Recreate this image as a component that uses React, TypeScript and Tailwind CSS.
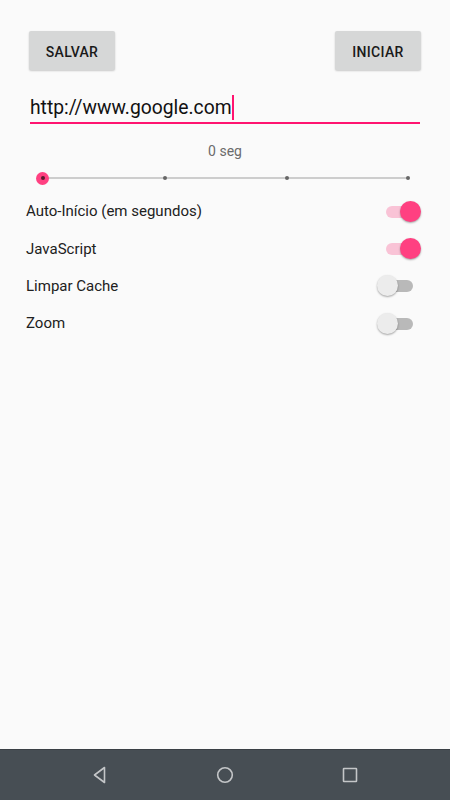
const Toggle = ({ on }: { on: boolean }) => {
    return (
        <div className="relative w-[44px] h-[22px]">
            <div
                className={
                    "absolute left-[9px] top-[5px] w-[27px] h-[12px] rounded-full " +
                    (on ? "bg-[#f9c3d6]" : "bg-[#b9b9b9]")
                }
            />
            <div
                className={
                    "absolute top-0 w-[21px] h-[21px] rounded-full shadow-[0_1px_2px_rgba(0,0,0,0.35)] " +
                    (on ? "left-[23px] bg-[#ff4081]" : "left-0 bg-[#ececec]")
                }
            />
        </div>
    );
};

const settings = [
    { label: "Auto-Início (em segundos)", on: true },
    { label: "JavaScript", on: true },
    { label: "Limpar Cache", on: false },
    { label: "Zoom", on: false },
];

export default function App() {
    return (
        <div className="w-full h-[800px] flex flex-col bg-[#fafafa] font-['Roboto',sans-serif] text-[#212121]">
            <div className="flex-1 px-[26px] pt-[31px]">
                <div className="flex justify-between px-[3px]">
                    <button className="w-[86px] h-[39px] pt-[3px] rounded-[2px] bg-[#d6d7d7] shadow-[0_1px_2px_rgba(0,0,0,0.2)] text-[14px] font-medium tracking-[0.3px] text-[#1a1a1a]">
                        SALVAR
                    </button>
                    <button className="w-[86px] h-[39px] pt-[3px] rounded-[2px] bg-[#d6d7d7] shadow-[0_1px_2px_rgba(0,0,0,0.2)] text-[14px] font-medium tracking-[0.3px] text-[#1a1a1a]">
                        INICIAR
                    </button>
                </div>

                <div className="mx-[4px] mt-[25px] border-b-2 border-[#ff1470] pb-[2px] flex items-center">
                    <span className="text-[19.3px] leading-[25px] text-[#111]">http://www.google.com</span>
                    <span className="w-[2px] h-[25px] bg-[#ff1470]" />
                </div>

                <div className="mt-[19px] text-center text-[14px] leading-[16px] text-[#6b6b6b]">0 seg</div>

                <div className="relative mt-[12px] mx-[16px] h-[14px] flex items-center">
                    <div className="absolute left-0 right-0 h-[2px] bg-[#cdcdcd]" />
                    <div className="relative w-full flex justify-between items-center">
                        <div className="w-[4px] h-[4px]" />
                        <div className="w-[4px] h-[4px] rounded-full bg-[#666]" />
                        <div className="w-[4px] h-[4px] rounded-full bg-[#666]" />
                        <div className="w-[4px] h-[4px] rounded-full bg-[#666] mr-[-2px]" />
                    </div>
                    <div className="absolute left-[-6px] w-[13px] h-[13px] rounded-full bg-[#ff4081] flex items-center justify-center">
                        <div className="w-[4px] h-[4px] rounded-full bg-[#5a1a2e]" />
                    </div>
                </div>

                <div className="mt-[8px] flex flex-col">
                    {settings.map((s) => (
                        <div key={s.label} className="h-[37.3px] flex items-center justify-between">
                            <span className="text-[15px]">{s.label}</span>
                            <div className="mr-[3px]">
                                <Toggle on={s.on} />
                            </div>
                        </div>
                    ))}
                </div>
            </div>

            <div className="h-[51px] bg-[#474e54] border-t border-[#3a4045] flex items-center justify-around px-[37px]">
                <svg width="20" height="20" viewBox="0 0 20 20" className="text-[#c4c6c8]">
                    <path d="M14.5 2.5 L4.5 10 L14.5 17.5 Z" fill="none" stroke="currentColor" strokeWidth="1.6" strokeLinejoin="round" />
                </svg>
                <svg width="20" height="20" viewBox="0 0 20 20" className="text-[#c4c6c8]">
                    <circle cx="10" cy="10" r="7.3" fill="none" stroke="currentColor" strokeWidth="1.6" />
                </svg>
                <svg width="20" height="20" viewBox="0 0 20 20" className="text-[#c4c6c8]">
                    <rect x="3.5" y="3.5" width="13" height="13" rx="0.5" fill="none" stroke="currentColor" strokeWidth="1.6" />
                </svg>
            </div>
        </div>
    );
}
